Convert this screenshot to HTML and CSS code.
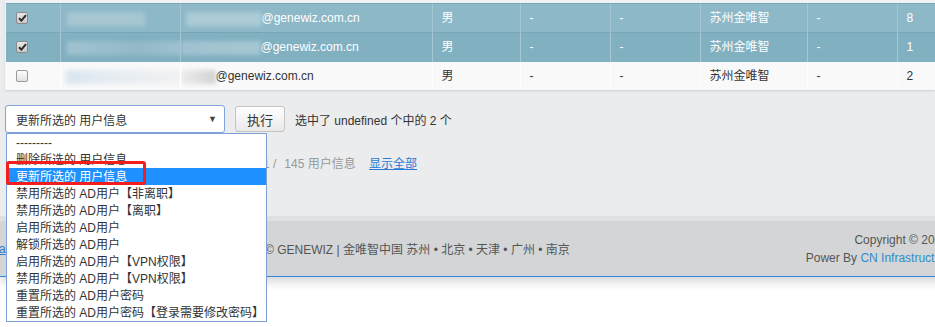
FILE: index.html
```html
<!DOCTYPE html>
<html>
  <head>
    <meta charset="utf-8">
    <title>用户信息</title>
    <link rel="stylesheet" href="styles.css">
  </head>
  <body>
    <div class="content">
      <div class="results">
        <table class="result-list">
          <colgroup>
            <col style="width: 54px">
            <col style="width: 120px">
            <col style="width: 252px">
            <col style="width: 88px">
            <col style="width: 90px">
            <col style="width: 90px">
            <col style="width: 107px">
            <col style="width: 90px">
            <col>
          </colgroup>
          <tbody>
            <tr class="selected row1">
              <td class="check"><span class="box checked"><svg width="9" height="8" viewBox="0 0 9 8"><path d="M1 4.2 L3.4 6.6 L8 1.2" fill="none" stroke="#2b2b2b" stroke-width="2"/></svg></span></td>
              <td><span class="blur name-a"></span></td>
              <td class="mail"><span class="blur mail-a"></span>@genewiz.com.cn</td>
              <td>男</td>
              <td>-</td>
              <td>-</td>
              <td>苏州金唯智</td>
              <td>-</td>
              <td>8</td>
            </tr>
            <tr class="selected row2">
              <td class="check"><span class="box checked"><svg width="9" height="8" viewBox="0 0 9 8"><path d="M1 4.2 L3.4 6.6 L8 1.2" fill="none" stroke="#2b2b2b" stroke-width="2"/></svg></span></td>
              <td><span class="blur name-b"></span></td>
              <td class="mail"><span class="blur mail-b"></span>@genewiz.com.cn</td>
              <td>男</td>
              <td>-</td>
              <td>-</td>
              <td>苏州金唯智</td>
              <td>-</td>
              <td>1</td>
            </tr>
            <tr class="row3">
              <td class="check"><span class="box"></span></td>
              <td><span class="blur name-c"></span></td>
              <td class="mail"><span class="blur mail-c"></span>@genewiz.com.cn</td>
              <td>男</td>
              <td>-</td>
              <td>-</td>
              <td>苏州金唯智</td>
              <td>-</td>
              <td>2</td>
            </tr>
          </tbody>
        </table>
      </div>

      <div class="actions">
        <div class="select">
          <span>更新所选的 用户信息</span>
          <span class="arrow">▼</span>
        </div>
        <button class="go">执行</button>
        <span class="counter">选中了 undefined 个中的 2 个</span>

        <!-- open option list of the select -->
        <ul class="options">
          <li>---------</li>
          <li>删除所选的 用户信息</li>
          <li class="active">更新所选的 用户信息</li>
          <li>禁用所选的 AD用户【非离职】</li>
          <li>禁用所选的 AD用户【离职】</li>
          <li>启用所选的 AD用户</li>
          <li>解锁所选的 AD用户</li>
          <li>启用所选的 AD用户【VPN权限】</li>
          <li>禁用所选的 AD用户【VPN权限】</li>
          <li>重置所选的 AD用户密码</li>
          <li>重置所选的 AD用户密码【登录需要修改密码】</li>
        </ul>
        <div class="mark"></div>
      </div>

      <p class="paginator">1 <span class="sep">/</span>145 用户信息 <a href="#">显示全部</a></p>
    </div>

    <div class="footer-wrap">
      <div class="footer">
        <div class="foot-left"><a href="#">ca</a></div>
        <div class="foot-center">© GENEWIZ | 金唯智中国 苏州 • 北京 • 天津 • 广州 • 南京</div>
        <div class="foot-right">
          <div>Copyright © 2020 Genewiz</div>
          <div>Power By <a href="#">CN Infrastructure IT Team</a></div>
        </div>
      </div>
    </div>
  </body>
</html>
```

FILE: styles.css
```css
body {
  margin: 0;
  min-height: 327px;
  background-color: #fff;
  font-family: "Liberation Sans", "Noto Sans CJK SC", sans-serif;
  font-size: 12px;
  color: #333;
}

.content {
  background-color: #ebecee;
  padding-bottom: 43px;
}

/* result table */
.results {
  margin-left: 5px;
  padding-top: 3px;
  background-color: #f1f2f3;
  border-left: 1px solid #f6f6f6;
  box-shadow: 0 1px 2px rgba(0, 0, 0, 0.12);
}

.result-list {
  width: 930px;
  table-layout: fixed;
  border-collapse: collapse;
}

.result-list td {
  height: 28px;
  padding: 0 0 0 9px;
  border-top: 1px solid #79a5b5;
  border-left: 1px solid #a5c7d3;
  line-height: 16px;
  white-space: nowrap;
  overflow: hidden;
}

.result-list td:first-child {
  border-left: none;
}

.row1 td {
  background-color: #8db8c8;
  color: #fff;
}

.row2 td {
  background-color: #81b0c1;
  color: #fff;
}

.row3 td {
  background-color: #f9f9f9;
  border-top-color: #81b0c1;
  border-left-color: #fff;
}

.result-list td.check {
  padding-left: 10px;
}

.result-list td.mail {
  padding-left: 0;
}

.box {
  display: inline-block;
  width: 10px;
  height: 10px;
  border: 1px solid #9a9a9a;
  border-radius: 2px;
  background: linear-gradient(#fdfdfd, #e2e2e2);
  vertical-align: middle;
  position: relative;
  top: -1px;
}

.box.checked {
  background: linear-gradient(#e6e6e6, #c9c9c9);
  border-color: #8a8a8a;
}

.box svg {
  display: block;
  margin: 1px 0 0 1px;
}

/* blurred personal data */
.blur {
  display: inline-block;
  height: 14px;
  vertical-align: middle;
  filter: blur(2px);
}

.name-a {
  width: 78px;
  margin-left: -3px;
  background-color: #a6c6d2;
}

.mail-a {
  width: 76px;
  margin-left: 5px;
  background-color: #abcbd6;
}

.name-b {
  width: 118px;
  margin-left: -3px;
  background: linear-gradient(90deg, #a0c3d0, #93b9c7 60%, #9fc2cf);
}

.mail-b {
  width: 80px;
  background: linear-gradient(90deg, #9fc2cf, #a5c7d3);
}

.name-c {
  width: 116px;
  margin-left: -4px;
  background: linear-gradient(90deg, #d9e5ef, #e4ebf1 30%, #f1f1f1);
}

.mail-c {
  width: 35px;
  background: linear-gradient(90deg, #ececec, #d2d2d2);
}

/* action bar */
.actions {
  position: relative;
  display: flex;
  align-items: center;
  margin: 15px 0 0 5px;
}

.select {
  display: flex;
  align-items: center;
  justify-content: space-between;
  box-sizing: border-box;
  width: 220px;
  height: 28px;
  padding: 0 7px 0 10px;
  background-color: #fff;
  border: 1px solid #7fa3da;
  border-radius: 3px;
}

.arrow {
  font-size: 9px;
  color: #444;
}

.go {
  height: 26px;
  width: 50px;
  margin-left: 10px;
  padding: 0;
  font-family: inherit;
  font-size: 13px;
  color: #333;
  background: linear-gradient(#ffffff, #e9e9e9);
  border: 1px solid #c4c4c4;
  border-radius: 3px;
}

.counter {
  margin-left: 10px;
}

.options {
  position: absolute;
  top: 28px;
  left: 1px;
  z-index: 2;
  width: 259px;
  margin: 0;
  padding: 0;
  list-style: none;
  background-color: #fff;
  border: 1px solid #7d9fd6;
}

.options li {
  height: 17px;
  line-height: 19px;
  padding-left: 9px;
  white-space: nowrap;
}

.options li.active {
  background-color: #1e90ff;
  color: #fff;
}

/* red hint frame drawn over the list */
.mark {
  position: absolute;
  top: 56px;
  left: 1px;
  z-index: 3;
  width: 134px;
  height: 18px;
  border: 3px solid #f21d1d;
  border-radius: 3px;
}

.paginator {
  margin: 22px 0 0 0;
  padding-left: 263px;
  line-height: 18px;
  color: #999;
}

.paginator .sep {
  margin-right: 8px;
}

.paginator a {
  margin-left: 10px;
  color: #2a7ad2;
}

/* footer */
.footer-wrap {
  overflow: hidden;
  padding-bottom: 16px;
}

.footer {
  display: flex;
  align-items: center;
  height: 55px;
  margin-right: -63px;
  background-color: #d4d5d7;
  border-top: 5px solid #dfe0e2;
  border-bottom: 1px solid #2c8ae0;
  box-shadow: 0 4px 10px rgba(0, 0, 0, 0.18);
  color: #555;
}

.foot-left {
  width: 265px;
  margin-left: -7px;
}

.foot-left a {
  color: #2a7ad2;
}

.foot-center {
  margin-left: 7px;
  padding-bottom: 1px;
}

.foot-right {
  flex: 1;
  text-align: right;
  line-height: 18px;
  white-space: nowrap;
}

.foot-right a {
  color: #2f8ccc;
  text-decoration: none;
}
```
